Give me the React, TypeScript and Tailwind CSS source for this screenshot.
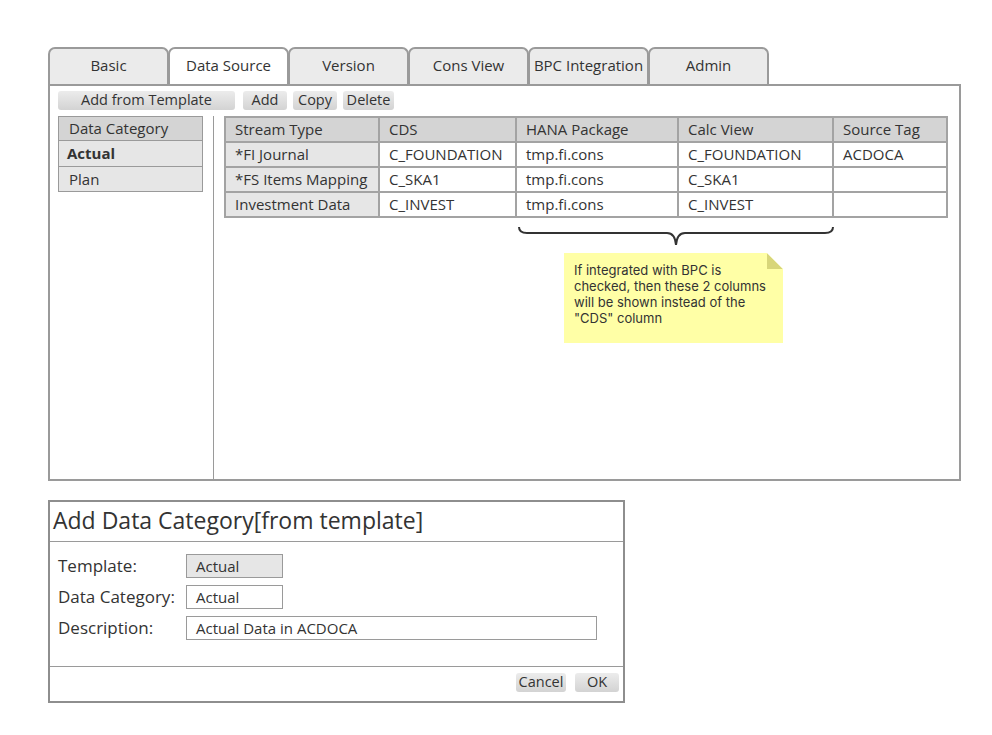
import React from 'react'

const tabs = ['Basic', 'Data Source', 'Version', 'Cons View', 'BPC Integration', 'Admin']

const rows = [
  ['*FI Journal', 'C_FOUNDATION', 'tmp.fi.cons', 'C_FOUNDATION', 'ACDOCA'],
  ['*FS Items Mapping', 'C_SKA1', 'tmp.fi.cons', 'C_SKA1', ''],
  ['Investment Data', 'C_INVEST', 'tmp.fi.cons', 'C_INVEST', ''],
]

const colWidths = ['w-[154px]', 'w-[137px]', 'w-[162px]', 'w-[155px]', 'w-[114px]']

function Btn({ children, className = '' }: { children: React.ReactNode; className?: string }) {
  return (
    <div
      className={`h-[19px] flex items-center justify-center rounded-[3px] bg-gradient-to-b from-[#ececec] to-[#d3d3d3] text-[14.5px] leading-none text-[#333] ${className}`}
    >
      {children}
    </div>
  )
}

export default function App() {
  return (
    <div
      className="min-h-screen bg-white pl-[48px] pt-[47px] text-[#333]"
      style={{ fontFamily: '"Open Sans", "Noto Sans", sans-serif' }}
    >
      {/* tabs */}
      <div className="flex">
        {tabs.map((t) => (
          <div
            key={t}
            className={`w-[121px] -mr-px h-[37px] pb-[3px] flex items-center justify-center border-2 border-b-0 border-[#9a9a9a] rounded-t-[7px] text-[15px] ${
              t === 'Data Source' ? 'bg-white' : 'bg-[#ebebeb]'
            }`}
          >
            {t}
          </div>
        ))}
      </div>

      {/* main panel */}
      <div className="relative w-[913px] h-[397px] border-2 border-[#9a9a9a] flex flex-col">
        <div className="flex gap-[7px] pl-[8px] pt-[5px]">
          <Btn className="w-[177px]">Add from Template</Btn>
          <Btn className="w-[44px] ml-[1px]">Add</Btn>
          <Btn className="w-[44px] -ml-[1px]">Copy</Btn>
          <Btn className="w-[51px] -ml-[1px]">Delete</Btn>
        </div>

        <div className="flex flex-1 mt-[6px] pl-[8px]">
          <div className="w-[145px] text-[15px]">
            <div className="h-[25px] flex items-center pl-[10px] bg-[#d4d4d4] border border-[#9a9a9a]">Data Category</div>
            <div className="h-[26px] flex items-center pl-[8px] bg-[#e6e6e6] border border-t-0 border-[#9a9a9a] font-bold">Actual</div>
            <div className="h-[25px] flex items-center pl-[10px] bg-[#e6e6e6] border border-t-0 border-[#9a9a9a]">Plan</div>
          </div>
          <div className="ml-[10px] border-l border-[#9a9a9a]" />
          <div className="ml-[10px]">
            <table className="border-collapse text-[15px]">
              <thead>
                <tr className="h-[25px] bg-[#d4d4d4]">
                  {['Stream Type', 'CDS', 'HANA Package', 'Calc View', 'Source Tag'].map((h, i) => (
                    <th key={h} className={`${colWidths[i]} border-2 border-[#a3a3a3] font-normal text-left pl-[9px] p-0`}>
                      {h}
                    </th>
                  ))}
                </tr>
              </thead>
              <tbody>
                {rows.map((r) => (
                  <tr key={r[0]} className="h-[25px]">
                    {r.map((c, i) => (
                      <td
                        key={i}
                        className={`border-2 border-[#a3a3a3] pl-[9px] p-0 ${i === 0 ? 'bg-[#e6e6e6]' : 'bg-white'}`}
                      >
                        {c}
                      </td>
                    ))}
                  </tr>
                ))}
              </tbody>
            </table>
          </div>
        </div>

        {/* brace annotation */}
        <svg className="absolute left-[467px] top-[139px]" width="318" height="26" viewBox="0 0 318 26">
          <path
            d="M2 2 Q2 8 10 8 L150 8 Q158 8 159 20 Q160 8 168 8 L308 8 Q316 8 316 2"
            fill="none"
            stroke="#333"
            strokeWidth="2"
          />
        </svg>

        {/* sticky note */}
        <div
          className="absolute left-[514px] top-[167px] w-[219px] h-[90px] bg-[#ffffa6] pl-[10px] pt-[9px] text-[13px] leading-[16px] text-[#333]"
          style={{ fontFamily: 'Inter, "Open Sans", sans-serif' }}
        >
          <div
            className="absolute right-0 top-0 w-[16px] h-[16px] bg-[#d8d67a]"
            style={{ clipPath: 'polygon(0 0, 100% 100%, 0 100%)' }}
          />
          <div
            className="absolute right-0 top-0 w-[16px] h-[16px] bg-white"
            style={{ clipPath: 'polygon(0 0, 100% 0, 100% 100%)' }}
          />
          If integrated with BPC is
          <br />
          checked, then these 2 columns
          <br />
          will be shown instead of the
          <br />
          "CDS" column
        </div>
      </div>

      {/* dialog */}
      <div className="mt-[19px] w-[577px] h-[203px] border-2 border-[#8e8e8e] flex flex-col">
        <div className="h-[40px] flex items-center pl-[3px] pb-[3px] text-[23px] border-b border-[#9a9a9a]">
          Add Data Category[from template]
        </div>
        <div className="flex-1 pt-[12px] pl-[8px] flex flex-col gap-[7px] text-[17px]">
          <div className="flex items-center h-[24px]">
            <div className="w-[128px]">Template:</div>
            <div className="w-[97px] h-[24px] flex items-center pl-[9px] bg-[#e6e6e6] border border-[#9a9a9a] text-[15px]">Actual</div>
          </div>
          <div className="flex items-center h-[24px]">
            <div className="w-[128px]">Data Category:</div>
            <div className="w-[97px] h-[24px] flex items-center pl-[9px] bg-white border border-[#9a9a9a] text-[15px]">Actual</div>
          </div>
          <div className="flex items-center h-[24px]">
            <div className="w-[128px]">Description:</div>
            <div className="w-[411px] h-[24px] flex items-center pl-[9px] bg-white border border-[#9a9a9a] text-[15px]">
              Actual Data in ACDOCA
            </div>
          </div>
        </div>
        <div className="h-[35px] border-t border-[#9a9a9a] flex justify-end items-start pt-[6px] pr-[4px] gap-[9px]">
          <Btn className="w-[50px]">Cancel</Btn>
          <Btn className="w-[44px]">OK</Btn>
        </div>
      </div>
    </div>
  )
}
